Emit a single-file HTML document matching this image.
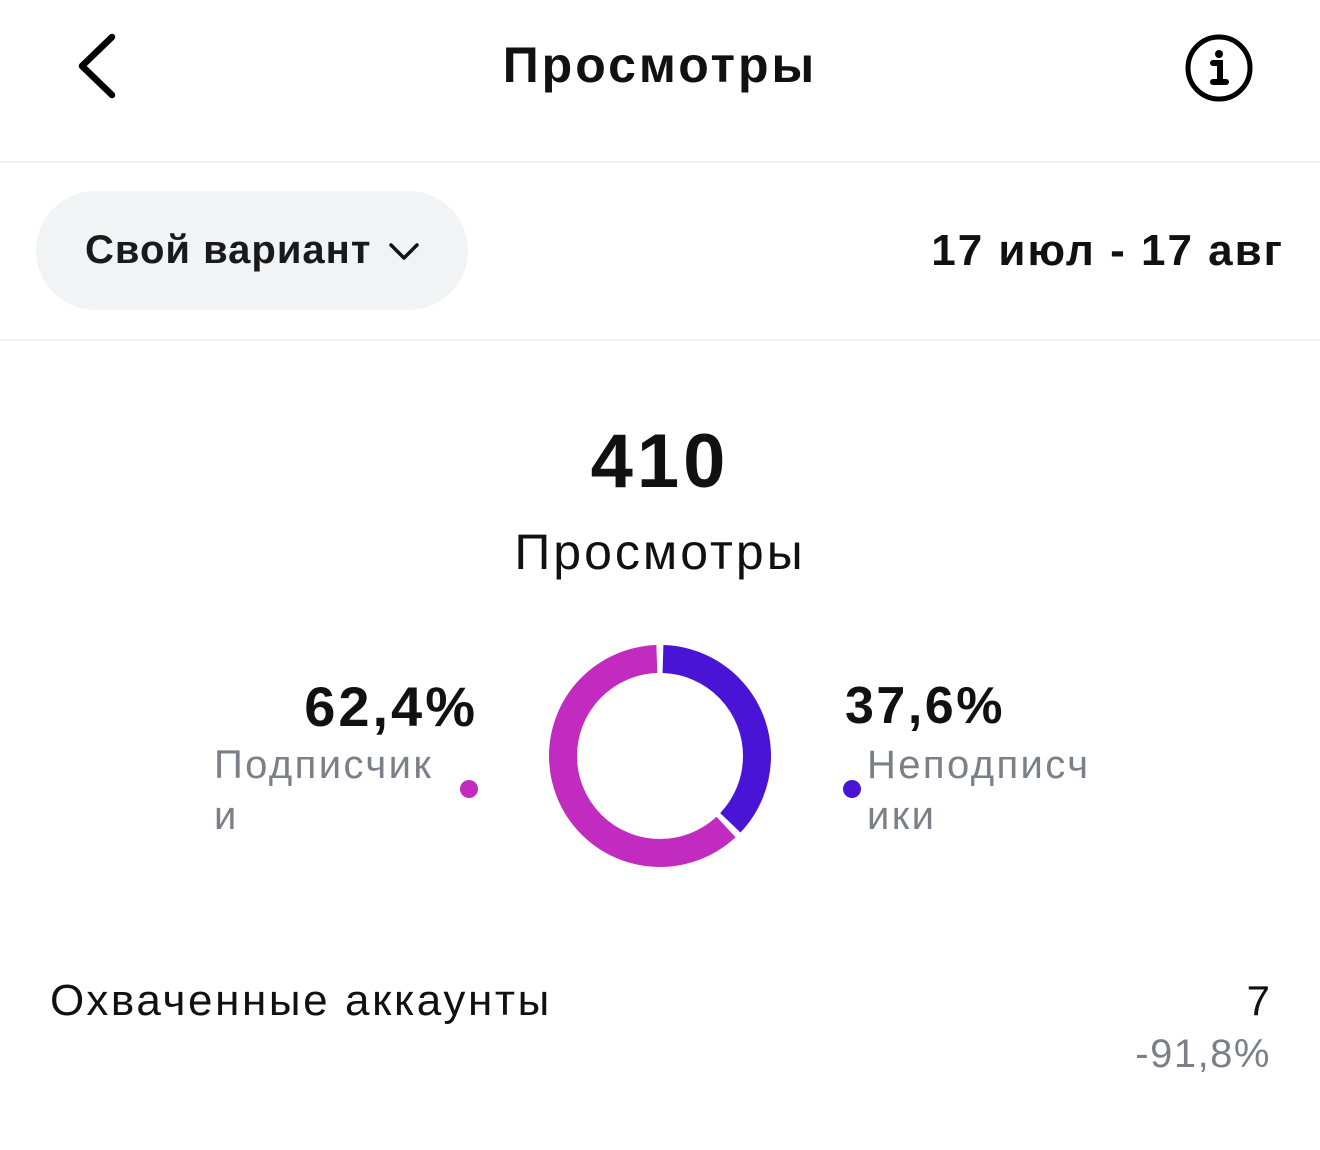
<!DOCTYPE html>
<html><head><meta charset="utf-8"><style>
body{margin:0;width:1320px;height:1150px;background:#fff;font-family:"Liberation Sans","DejaVu Sans",sans-serif;color:#000;position:relative;overflow:hidden}
.a{position:absolute;white-space:nowrap}
.hr{position:absolute;left:0;width:1320px;height:2px;background:#f2f2f2}
</style></head><body>
<svg class="a" style="left:70px;top:30px" width="50" height="70" viewBox="0 0 50 70"><path d="M42 7 L12 36 L42 65" fill="none" stroke="#000" stroke-width="6.5" stroke-linecap="round" stroke-linejoin="round"/></svg>
<div class="a" style="left:0;width:1320px;text-align:center;top:36px;font-size:50px;letter-spacing:3px;font-weight:bold;color:#111">Просмотры</div>
<svg class="a" style="left:1183px;top:32px" width="72" height="72" viewBox="0 0 72 72"><circle cx="36" cy="36" r="31" fill="none" stroke="#000" stroke-width="5"/><circle cx="36" cy="22" r="4" fill="#000"/><path d="M30 31 H37 V49 M30 50 H43" fill="none" stroke="#000" stroke-width="6" stroke-linecap="round"/></svg>
<div class="hr" style="top:161px"></div>
<div class="a" style="left:36px;top:191px;width:432px;height:119px;border-radius:60px;background:#f2f3f5"></div>
<div class="a" style="left:85px;top:228px;font-size:40px;letter-spacing:1px;font-weight:bold;color:#1a1a1a">Свой вариант</div>
<svg class="a" style="left:388px;top:241px" width="32" height="22" viewBox="0 0 32 22"><path d="M3 4 L16 17 L29 4" fill="none" stroke="#111" stroke-width="3.5" stroke-linecap="round" stroke-linejoin="round"/></svg>
<div class="a" style="right:36px;top:226px;font-size:44px;letter-spacing:2px;font-weight:bold;color:#111">17 июл - 17 авг</div>
<div class="hr" style="top:339px"></div>
<div class="a" style="left:0;width:1320px;text-align:center;top:418px;font-size:76px;letter-spacing:4px;font-weight:bold;color:#111">410</div>
<div class="a" style="left:0;width:1320px;text-align:center;top:523px;font-size:50px;letter-spacing:3px;color:#111">Просмотры</div>
<div class="a" style="right:842px;top:674px;font-size:56px;letter-spacing:3px;font-weight:bold;color:#111">62,4%</div>
<div class="a" style="left:214px;top:740px;font-size:40px;letter-spacing:2.4px;color:#7b8088;line-height:51px;white-space:normal">Подписчик<br>и</div>
<div class="a" style="left:460px;top:780px;width:18px;height:18px;border-radius:50%;background:#c22bbf"></div>
<div class="a" style="left:845px;top:676px;font-size:52px;letter-spacing:2.5px;font-weight:bold;color:#111">37,6%</div>
<div class="a" style="left:867px;top:740px;font-size:40px;letter-spacing:2.4px;color:#7b8088;line-height:51px;white-space:normal">Неподписч<br>ики</div>
<div class="a" style="left:843px;top:780px;width:18px;height:18px;border-radius:50%;background:#4a14d6"></div>
<svg class="a" style="left:540px;top:636px" width="240" height="240" viewBox="0 0 240 240">
<g transform="rotate(-90 120 120)">
<circle cx="120" cy="120" r="97" fill="none" stroke="#4a14d6" stroke-width="28" stroke-dasharray="223 1000" stroke-dashoffset="-3"/>
<circle cx="120" cy="120" r="97" fill="none" stroke="#c22bbf" stroke-width="28" stroke-dasharray="374 1000" stroke-dashoffset="-232"/>
</g></svg>
<div class="a" style="left:50px;top:976px;font-size:44px;letter-spacing:2.6px;color:#111">Охваченные аккаунты</div>
<div class="a" style="right:50px;top:977px;font-size:42px;color:#111">7</div>
<div class="a" style="right:49px;top:1032px;font-size:40px;letter-spacing:1.5px;color:#7b8088">-91,8%</div>
</body></html>
